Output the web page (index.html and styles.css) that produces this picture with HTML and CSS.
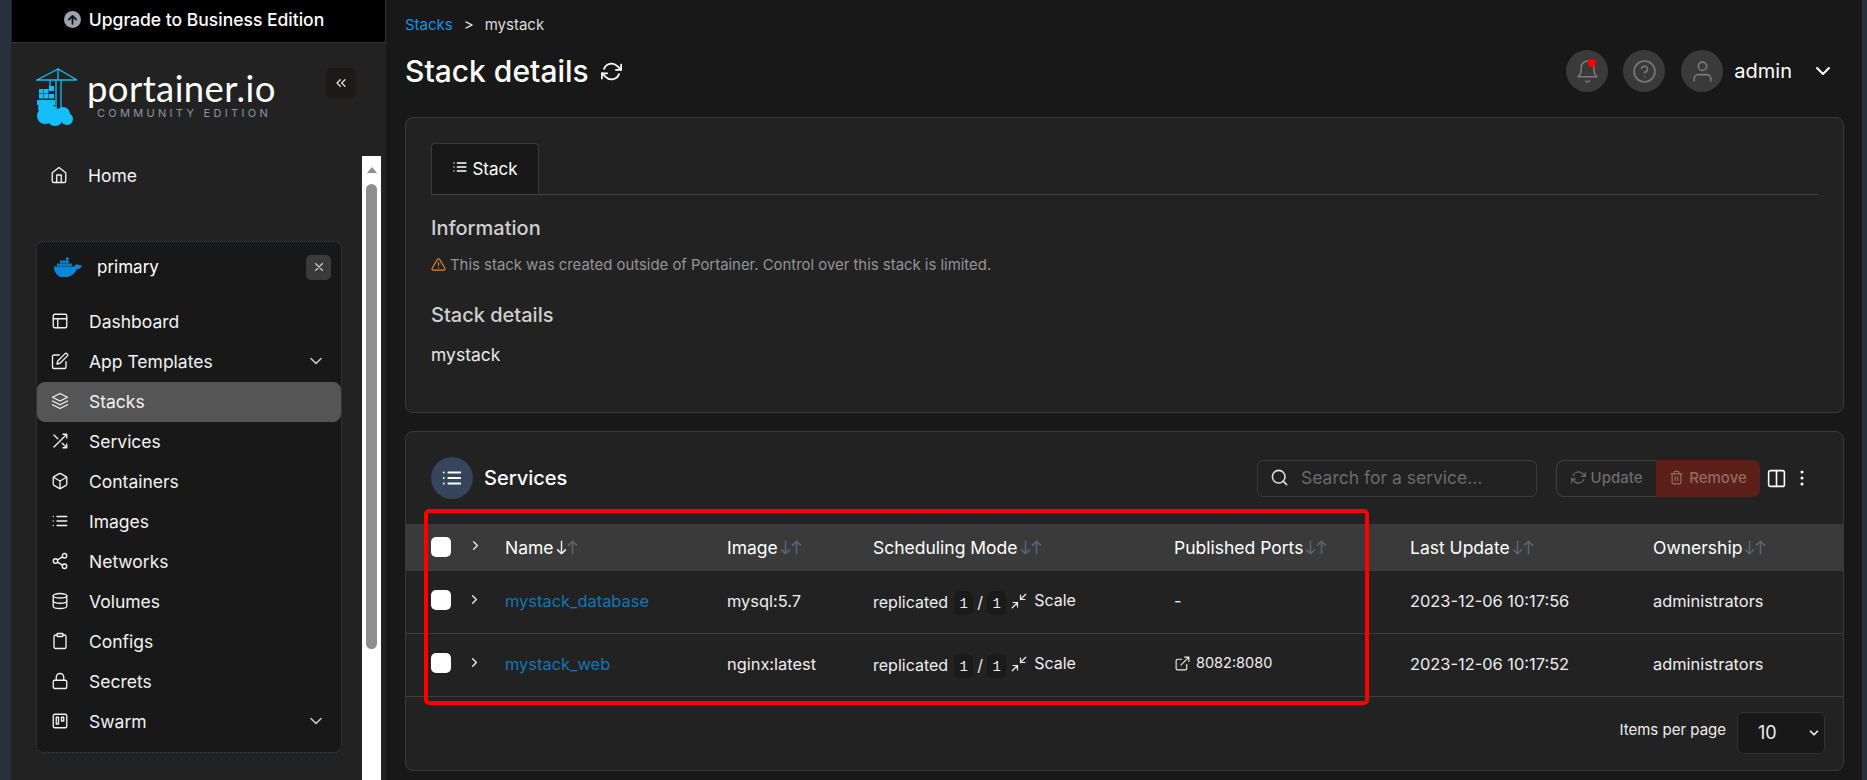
FILE: index.html
```html
<!DOCTYPE html>
<html lang="en">
<head>
    <meta charset="UTF-8">
    <title>Stack details | Portainer</title>
    <link rel="stylesheet" href="styles.css">
</head>
<body>
    <svg class="sprite" xmlns="http://www.w3.org/2000/svg">
        <symbol id="i-home" viewBox="0 0 24 24"><path d="M3 9l9-7 9 7v11a2 2 0 0 1-2 2H5a2 2 0 0 1-2-2z"/><path d="M9 22V12h6v10"/></symbol>
        <symbol id="i-layout" viewBox="0 0 24 24"><rect x="3" y="3" width="18" height="18" rx="2"/><path d="M3 9h18M9 21V9"/></symbol>
        <symbol id="i-edit" viewBox="0 0 24 24"><path d="M11 4H4a2 2 0 0 0-2 2v14a2 2 0 0 0 2 2h14a2 2 0 0 0 2-2v-7"/><path d="M18.5 2.5a2.121 2.121 0 0 1 3 3L12 15l-4 1 1-4 9.5-9.5z"/></symbol>
        <symbol id="i-layers" viewBox="0 0 24 24"><path d="M12 2 2 7l10 5 10-5-10-5z"/><path d="M2 17l10 5 10-5"/><path d="M2 12l10 5 10-5"/></symbol>
        <symbol id="i-shuffle" viewBox="0 0 24 24"><path d="M16 3h5v5M4 20 21 3M21 16v5h-5M15 15l6 6M4 4l5 5"/></symbol>
        <symbol id="i-box" viewBox="0 0 24 24"><path d="M21 16V8a2 2 0 0 0-1-1.73l-7-4a2 2 0 0 0-2 0l-7 4A2 2 0 0 0 3 8v8a2 2 0 0 0 1 1.73l7 4a2 2 0 0 0 2 0l7-4A2 2 0 0 0 21 16z"/><path d="M3.27 6.96 12 12.01l8.73-5.05M12 22.08V12"/></symbol>
        <symbol id="i-list" viewBox="0 0 24 24"><path d="M8 6h13M8 12h13M8 18h13M3 6h.01M3 12h.01M3 18h.01"/></symbol>
        <symbol id="i-share" viewBox="0 0 24 24"><circle cx="18" cy="5" r="3"/><circle cx="6" cy="12" r="3"/><circle cx="18" cy="19" r="3"/><path d="M8.59 13.51l6.83 3.98M15.41 6.51l-6.82 3.98"/></symbol>
        <symbol id="i-database" viewBox="0 0 24 24"><ellipse cx="12" cy="5" rx="9" ry="3"/><path d="M21 12c0 1.66-4 3-9 3s-9-1.34-9-3"/><path d="M3 5v14c0 1.66 4 3 9 3s9-1.34 9-3V5"/></symbol>
        <symbol id="i-clipboard" viewBox="0 0 24 24"><path d="M16 4h2a2 2 0 0 1 2 2v14a2 2 0 0 1-2 2H6a2 2 0 0 1-2-2V6a2 2 0 0 1 2-2h2"/><rect x="8" y="2" width="8" height="4" rx="1"/></symbol>
        <symbol id="i-lock" viewBox="0 0 24 24"><rect x="3" y="11" width="18" height="11" rx="2"/><path d="M7 11V7a5 5 0 0 1 10 0v4"/></symbol>
        <symbol id="i-trello" viewBox="0 0 24 24"><rect x="3" y="3" width="18" height="18" rx="2"/><rect x="7" y="7" width="3" height="9"/><rect x="14" y="7" width="3" height="5"/></symbol>
        <symbol id="i-down" viewBox="0 0 24 24"><path d="M6 9l6 6 6-6"/></symbol>
        <symbol id="i-right" viewBox="0 0 24 24"><path d="M9 18l6-6-6-6"/></symbol>
        <symbol id="i-refresh" viewBox="0 0 24 24"><path d="M23 4v6h-6M1 20v-6h6"/><path d="M3.51 9a9 9 0 0 1 14.85-3.36L23 10M1 14l4.64 4.36A9 9 0 0 0 20.49 15"/></symbol>
        <symbol id="i-shrink" viewBox="0 0 24 24"><path d="M4 14h6v6M20 10h-6V4M14 10l7-7M3 21l7-7"/></symbol>
        <symbol id="i-external" viewBox="0 0 24 24"><path d="M18 13v6a2 2 0 0 1-2 2H5a2 2 0 0 1-2-2V8a2 2 0 0 1 2-2h6"/><path d="M15 3h6v6M10 14 21 3"/></symbol>
        <symbol id="i-arrow-down" viewBox="0 0 12 24"><path d="M6 4v16M1 15l5 5 5-5"/></symbol>
        <symbol id="i-arrow-up" viewBox="0 0 12 24"><path d="M6 20V4M1 9l5-5 5 5"/></symbol>
    </svg>

    <div class="edge"></div>

    <aside class="sidebar">
        <div class="upgrade">
            <svg class="upgrade-icon" viewBox="0 0 24 24"><circle cx="12" cy="12" r="12"/><path d="M12 18V7M7 12l5-5 5 5"/></svg>
            Upgrade to Business Edition
        </div>

        <div class="brand">
            <svg class="brand-logo" viewBox="0 0 41 58">
                <g class="crane">
                    <path d="M0 12h41M1 12 22 1l19 11M22 0v12"/>
                    <path d="M20 12v33M25 12v31"/>
                    <path d="M14 12v6"/>
                </g>
                <g class="crate">
                    <rect x="13" y="18" width="5" height="5"/>
                    <rect x="3" y="21" width="4.5" height="4.5"/><rect x="8" y="21" width="4.5" height="4.5"/>
                    <rect x="3" y="26" width="4.5" height="4.5"/><rect x="8" y="26" width="4.5" height="4.5"/><rect x="13" y="26" width="5" height="4.5"/>
                    <rect x="1" y="32" width="18" height="5"/>
                </g>
                <g class="crate">
                    <circle cx="10" cy="40" r="8"/>
                    <circle cx="27" cy="46" r="7"/>
                    <circle cx="9" cy="48" r="8"/>
                    <circle cx="19" cy="50" r="8"/>
                    <circle cx="31" cy="51" r="6"/>
                    <circle cx="16" cy="45" r="7"/>
                </g>
            </svg>
            <div class="brand-text">
                <div class="brand-name">portainer.io</div>
                <div class="brand-sub">COMMUNITY EDITION</div>
            </div>
            <button class="collapse"><svg class="icon" viewBox="0 0 24 24"><path d="M11 17l-5-5 5-5M18 17l-5-5 5-5"/></svg></button>
        </div>

        <div class="side-scroll">
            <nav class="side-nav">
                <a class="nav-item nav-home"><svg class="icon"><use href="#i-home"/></svg>Home</a>

                <div class="env">
                    <div class="env-head">
                        <svg class="whale" viewBox="0 0 28 20">
                            <path d="M0 9.500h20.500c.5-1.600 2-2.600 3-2.200.4.800 1.800 1 4.500 1.100-1 2.800-2.500 3.500-5 3.600C20.800 17 16.500 20.500 10 20.500 3.500 20.500-.2 15-.1 9.500z"/>
                            <rect x="3" y="6.500" width="2.700" height="2.700"/><rect x="6" y="6.500" width="2.700" height="2.700"/><rect x="9" y="6.500" width="2.700" height="2.700"/><rect x="12" y="6.500" width="2.700" height="2.700"/><rect x="15" y="6.500" width="2.700" height="2.700"/>
                            <rect x="6" y="3.500" width="2.700" height="2.700"/><rect x="9" y="3.500" width="2.700" height="2.700"/><rect x="12" y="3.500" width="2.700" height="2.700"/>
                            <rect x="12" y="0.500" width="2.700" height="2.700"/>
                        </svg>
                        <span class="env-name">primary</span>
                        <button class="env-close"><svg class="icon" viewBox="0 0 24 24"><path d="M18 6 6 18M6 6l12 12"/></svg></button>
                    </div>
                    <a class="nav-item"><svg class="icon"><use href="#i-layout"/></svg>Dashboard</a>
                    <a class="nav-item"><svg class="icon"><use href="#i-edit"/></svg>App Templates<svg class="icon nav-chevron"><use href="#i-down"/></svg></a>
                    <a class="nav-item active"><svg class="icon"><use href="#i-layers"/></svg>Stacks</a>
                    <a class="nav-item"><svg class="icon"><use href="#i-shuffle"/></svg>Services</a>
                    <a class="nav-item"><svg class="icon"><use href="#i-box"/></svg>Containers</a>
                    <a class="nav-item"><svg class="icon"><use href="#i-list"/></svg>Images</a>
                    <a class="nav-item"><svg class="icon"><use href="#i-share"/></svg>Networks</a>
                    <a class="nav-item"><svg class="icon"><use href="#i-database"/></svg>Volumes</a>
                    <a class="nav-item"><svg class="icon"><use href="#i-clipboard"/></svg>Configs</a>
                    <a class="nav-item"><svg class="icon"><use href="#i-lock"/></svg>Secrets</a>
                    <a class="nav-item"><svg class="icon"><use href="#i-trello"/></svg>Swarm<svg class="icon nav-chevron"><use href="#i-down"/></svg></a>
                </div>
            </nav>
            <div class="scrollbar">
                <div class="scroll-up"></div>
                <div class="scroll-thumb"></div>
            </div>
        </div>
    </aside>

    <main class="main">
        <header class="top">
            <div>
                <div class="crumbs"><a>Stacks</a><span class="crumb-sep">&gt;</span>mystack</div>
                <h1>Stack details<svg class="icon title-refresh"><use href="#i-refresh"/></svg></h1>
            </div>
            <div class="top-right">
                <span class="round bell">
                    <svg class="icon" viewBox="0 0 24 24"><path d="M18 8A6 6 0 0 0 6 8c0 7-3 9-3 9h18s-3-2-3-9"/><path d="M13.730 21a2 2 0 0 1-3.460 0"/></svg>
                    <i class="dot"></i>
                </span>
                <span class="round help"><svg class="icon" viewBox="0 0 24 24"><circle cx="12" cy="12" r="10"/><path d="M9.090 9a3 3 0 0 1 5.830 1c0 2-3 3-3 3M12 17h.01"/></svg></span>
                <span class="round user"><svg class="icon" viewBox="0 0 24 24"><path d="M20 21v-2a4 4 0 0 0-4-4H8a4 4 0 0 0-4 4v2"/><circle cx="12" cy="7" r="4"/></svg></span>
                <span class="username">admin</span>
                <svg class="icon user-chevron"><use href="#i-down"/></svg>
            </div>
        </header>

        <section class="card info-card">
            <div class="tabs">
                <div class="tab"><svg class="icon"><use href="#i-list"/></svg>Stack</div>
            </div>
            <h2 class="info-title">Information</h2>
            <p class="warning">
                <svg class="icon" viewBox="0 0 24 24"><path d="M10.290 3.860 1.820 18a2 2 0 0 0 1.710 3h16.940a2 2 0 0 0 1.710-3L13.710 3.860a2 2 0 0 0-3.420 0z"/><path d="M12 9v4M12 17h.01"/></svg>
                This stack was created outside of Portainer. Control over this stack is limited.
            </p>
            <h2 class="details-title">Stack details</h2>
            <p class="stack-name">mystack</p>
        </section>

        <section class="card services-card">
            <div class="table-head">
                <span class="head-icon"><svg class="icon"><use href="#i-list"/></svg></span>
                <h2>Services</h2>
                <div class="search">
                    <svg class="icon" viewBox="0 0 24 24"><circle cx="11" cy="11" r="8"/><path d="M21 21l-4.350-4.350"/></svg>
                    <span>Search for a service...</span>
                </div>
                <div class="actions">
                    <button class="btn-update"><svg class="icon"><use href="#i-refresh"/></svg>Update</button>
                    <button class="btn-remove">
                        <svg class="icon" viewBox="0 0 24 24"><path d="M3 6h18M19 6v14a2 2 0 0 1-2 2H7a2 2 0 0 1-2-2V6m3 0V4a2 2 0 0 1 2-2h4a2 2 0 0 1 2 2v2M10 11v6M14 11v6"/></svg>Remove
                    </button>
                </div>
                <svg class="icon columns" viewBox="0 0 24 24"><rect x="3" y="3" width="18" height="18" rx="2"/><path d="M12 3v18"/></svg>
                <svg class="more" viewBox="0 0 4 16"><circle cx="2" cy="2" r="1.500"/><circle cx="2" cy="8" r="1.500"/><circle cx="2" cy="14" r="1.500"/></svg>
            </div>

            <table class="services">
                <colgroup>
                    <col class="c-select"><col class="c-expand"><col class="c-name"><col class="c-image"><col class="c-mode"><col class="c-ports"><col class="c-update"><col>
                </colgroup>
                <thead>
                    <tr>
                        <th><span class="check"></span></th>
                        <th><svg class="icon chevron"><use href="#i-right"/></svg></th>
                        <th>Name<span class="sort sorted"><svg><use href="#i-arrow-down"/></svg><svg><use href="#i-arrow-up"/></svg></span></th>
                        <th>Image<span class="sort"><svg><use href="#i-arrow-down"/></svg><svg><use href="#i-arrow-up"/></svg></span></th>
                        <th>Scheduling Mode<span class="sort"><svg><use href="#i-arrow-down"/></svg><svg><use href="#i-arrow-up"/></svg></span></th>
                        <th>Published Ports<span class="sort"><svg><use href="#i-arrow-down"/></svg><svg><use href="#i-arrow-up"/></svg></span></th>
                        <th>Last Update<span class="sort"><svg><use href="#i-arrow-down"/></svg><svg><use href="#i-arrow-up"/></svg></span></th>
                        <th>Ownership<span class="sort"><svg><use href="#i-arrow-down"/></svg><svg><use href="#i-arrow-up"/></svg></span></th>
                    </tr>
                </thead>
                <tbody>
                    <tr>
                        <td><span class="check"></span></td>
                        <td><svg class="icon chevron"><use href="#i-right"/></svg></td>
                        <td><a class="link">mystack_database</a></td>
                        <td>mysql:5.7</td>
                        <td><div class="mode">replicated <code>1</code><span class="slash">/</span><code>1</code><svg class="icon shrink"><use href="#i-shrink"/></svg><span class="scale">Scale</span></div></td>
                        <td>-</td>
                        <td>2023-12-06 10:17:56</td>
                        <td>administrators</td>
                    </tr>
                    <tr>
                        <td><span class="check"></span></td>
                        <td><svg class="icon chevron"><use href="#i-right"/></svg></td>
                        <td><a class="link">mystack_web</a></td>
                        <td>nginx:latest</td>
                        <td><div class="mode">replicated <code>1</code><span class="slash">/</span><code>1</code><svg class="icon shrink"><use href="#i-shrink"/></svg><span class="scale">Scale</span></div></td>
                        <td><span class="port"><svg class="icon"><use href="#i-external"/></svg>8082:8080</span></td>
                        <td>2023-12-06 10:17:52</td>
                        <td>administrators</td>
                    </tr>
                </tbody>
            </table>

            <div class="table-foot">
                <span>Items per page</span>
                <div class="page-size">10<svg class="icon"><use href="#i-down"/></svg></div>
            </div>
        </section>
    </main>

    <div class="edge edge-right"></div>

    <!-- red box drawn over the table in the screenshot -->
    <div class="annotation"></div>
</body>
</html>
```

FILE: styles.css
```css
* {
    box-sizing: border-box;
}
html, body {
    height: 100%;
}
body {
    margin: 0;
    display: flex;
    height: 780px;
    overflow: hidden;
    position: relative;
    background: #181818;
    color: #fff;
    font-family: Inter, "Noto Sans", sans-serif;
    font-size: 14px;
}
h1, h2, p {
    margin: 0;
}
button {
    font-family: inherit;
    border: none;
    padding: 0;
}
.sprite {
    display: none;
}
.icon {
    width: 16px;
    height: 16px;
    fill: none;
    stroke: currentColor;
    stroke-width: 2;
    stroke-linecap: round;
    stroke-linejoin: round;
    flex-shrink: 0;
}

/* outer strips */
.edge {
    width: 11px;
    flex-shrink: 0;
    background: #27303d;
}
.edge-right {
    width: 5px;
}

/* sidebar */
.sidebar {
    width: 375px;
    flex-shrink: 0;
    background: #222;
    display: flex;
    flex-direction: column;
}
.upgrade {
    height: 43px;
    flex-shrink: 0;
    margin-left: 1px;
    background: #000;
    border: 1px solid #333;
    border-width: 0 1px 1px 0;
    display: flex;
    align-items: center;
    justify-content: center;
    gap: 8px;
    font-size: 17.5px;
    font-weight: 500;
    padding: 0 6px 3px 0;
}
.upgrade-icon {
    width: 17px;
    height: 17px;
    fill: #9ca3af;
    margin-left: -3px;
}
.upgrade-icon path {
    fill: none;
    stroke: #111;
    stroke-width: 2.5;
    stroke-linecap: round;
    stroke-linejoin: round;
}
.brand {
    height: 113px;
    flex-shrink: 0;
    display: flex;
    align-items: flex-start;
    padding: 25px 0 0 25px;
    position: relative;
}
.brand-logo {
    width: 41px;
    height: 58px;
}
.crane {
    fill: none;
    stroke: #13bef9;
    stroke-width: 1.3;
}
.crate {
    fill: #13bef9;
}
.brand-text {
    margin-left: 10px;
    width: 190px;
}
.brand-name {
    font-family: Lato, sans-serif;
    font-size: 36.5px;
    line-height: 36px;
    margin-top: 2px;
    letter-spacing: 0.4px;
}
.brand-sub {
    font-size: 11px;
    line-height: 12px;
    letter-spacing: 3.3px;
    color: #8a93a5;
    margin-left: 10px;
    margin-top: 1px;
    white-space: nowrap;
}
.collapse {
    margin-left: auto;
    margin-right: 30px;
    width: 30px;
    height: 30px;
    background: #1c1917;
    color: #ddd;
    border-radius: 5px;
    display: flex;
    align-items: center;
    justify-content: center;
}
.side-scroll {
    flex: 1;
    display: flex;
    min-height: 0;
}
.side-nav {
    width: 351px;
    flex-shrink: 0;
    padding: 0 20px 0 25px;
}
.nav-item {
    display: flex;
    align-items: center;
    height: 40px;
    padding: 0 0 2px 14px;
    gap: 20px;
    font-size: 17.5px;
    color: #f2f2f2;
    border-radius: 8px;
}
.nav-item .icon {
    width: 18px;
    height: 18px;
    stroke-width: 1.800;
}
.nav-home {
    margin-bottom: 45px;
}
.nav-item .nav-chevron {
    width: 20px;
    height: 20px;
    margin-left: auto;
    margin-right: 15px;
    color: #ccc;
}
.active {
    background: #555;
}
.env {
    height: 512px;
    background: #181818;
    border: 1px dotted #3f4a5c;
    border-radius: 8px;
    padding: 0;
}
.env-head {
    height: 50px;
    display: flex;
    align-items: center;
    padding: 0 10px 0 17px;
    margin-bottom: 10px;
}
.whale {
    width: 28px;
    height: 20px;
    fill: #0b87d9;
}
.env-name {
    font-size: 17px;
    margin-left: 15px;
}
.env-close {
    margin-left: auto;
    width: 25px;
    height: 25px;
    background: #3a3a3a;
    color: #ccc;
    border-radius: 5px;
    display: flex;
    align-items: center;
    justify-content: center;
}
.env-close .icon {
    width: 14px;
    height: 14px;
}
.scrollbar {
    width: 19px;
    background: #fff;
    padding: 0 4px;
    position: relative;
}
.scroll-up {
    width: 0;
    height: 0;
    margin: 11px auto 0;
    border: 5px solid transparent;
    border-top: none;
    border-bottom: 6px solid #8e8e8e;
    margin-bottom: 11px;
}
.scroll-thumb {
    height: 465px;
    background: #8e8e8e;
    border-radius: 6px;
}

/* main */
.main {
    flex: 1;
    min-width: 0;
    padding: 0 18px 0 19px;
}
.top {
    height: 117px;
    display: flex;
    justify-content: space-between;
}
.crumbs {
    font-size: 15px;
    color: #ddd;
    padding-top: 16px;
    line-height: 17px;
}
.crumbs a {
    color: #0d95e8;
}
.crumb-sep {
    margin: 0 11px;
}
h1 {
    font-size: 30px;
    font-weight: 500;
    line-height: 36px;
    margin-top: 20px;
    display: flex;
    align-items: center;
}
.title-refresh {
    width: 21px;
    height: 21px;
    margin-left: 12px;
}
.top-right {
    display: flex;
    align-items: center;
    height: 42px;
    margin-top: 50px;
    padding-right: 9px;
}
.round {
    width: 42px;
    height: 42px;
    border-radius: 50%;
    background: #3a3a3a;
    color: #7a7a7a;
    display: flex;
    align-items: center;
    justify-content: center;
    position: relative;
}
.round .icon {
    width: 25px;
    height: 25px;
    stroke-width: 1.500;
}
.help {
    margin-left: 15px;
}
.user {
    margin-left: 16px;
}
.dot {
    position: absolute;
    top: 9px;
    left: 22px;
    width: 8px;
    height: 8px;
    border-radius: 50%;
    background: #f00;
}
.username {
    font-size: 20px;
    margin-left: 11px;
}
.user-chevron {
    margin-left: 19px;
    width: 24px;
    height: 24px;
}

.card {
    background: #222;
    border: 1px solid #393939;
    border-radius: 8px;
    width: 1439px;
}
.info-card {
    height: 296px;
    padding: 25px 25px 0;
}
.tabs {
    height: 52px;
    border-bottom: 1px solid #444;
}
.tab {
    width: 108px;
    height: 52px;
    background: #181818;
    border: 1px solid #3a3a3a;
    border-bottom: 1px solid #444;
    border-radius: 4px 4px 0 0;
    display: flex;
    align-items: center;
    justify-content: center;
    gap: 4px;
    font-size: 17px;
}
.tab .icon {
    margin-top: -5px;
}
.info-title,
.details-title {
    font-size: 20px;
    font-weight: 500;
    color: #cfcfcf;
    line-height: 24px;
}
.info-title {
    margin-top: 21px;
}
.warning {
    display: flex;
    align-items: center;
    gap: 4px;
    margin-top: 16px;
    font-size: 14.9px;
    color: #949494;
    line-height: 18px;
}
.warning .icon {
    width: 15px;
    height: 15px;
    color: #e48a1b;
    stroke-width: 1.800;
    margin-top: -2px;
}
.details-title {
    margin-top: 29px;
}
.stack-name {
    margin-top: 18px;
    font-size: 17.5px;
    line-height: 20px;
    color: #e8e8e8;
}

.services-card {
    margin-top: 18px;
    height: 340px;
}
.table-head {
    height: 92px;
    display: flex;
    align-items: center;
    padding: 0 39px 0 25px;
}
.head-icon {
    width: 42px;
    height: 42px;
    border-radius: 50%;
    background: #36455c;
    display: flex;
    align-items: center;
    justify-content: center;
}
.head-icon .icon {
    width: 22px;
    height: 22px;
}
.table-head h2 {
    font-size: 20px;
    font-weight: 500;
    margin-left: 11px;
}
.search {
    margin-left: auto;
    width: 280px;
    height: 37px;
    border: 1px solid #3a3a3a;
    border-radius: 6px;
    display: flex;
    align-items: center;
    gap: 12px;
    padding: 0 0 1px 12px;
    font-size: 17.5px;
    color: #6b6b6b;
}
.search .icon {
    width: 19px;
    height: 19px;
    color: #ddd;
}
.actions {
    display: flex;
    height: 37px;
    margin-left: 19px;
}
.actions button {
    display: flex;
    align-items: center;
    justify-content: center;
    gap: 5px;
    font-size: 15px;
    font-weight: 500;
    padding-bottom: 1px;
}
.actions .icon {
    width: 15px;
    height: 15px;
}
.btn-update {
    width: 100px;
    background: transparent;
    color: #6b6b6b;
    border: 1px solid #3f3f3f;
    border-right: none;
    border-radius: 8px 0 0 8px;
}
.btn-remove {
    width: 104px;
    background: #5c2019;
    color: #8f6b66;
    border-radius: 0 8px 8px 0;
}
.columns {
    margin-left: 6px;
    width: 21px;
    height: 21px;
    stroke-width: 1.800;
}
.more {
    width: 4px;
    height: 16px;
    fill: #fff;
    margin-left: 13px;
}

.services {
    width: 100%;
    border-collapse: collapse;
    table-layout: fixed;
}
.c-select {
    width: 69px;
}
.c-expand {
    width: 30px;
}
.c-name {
    width: 222px;
}
.c-image {
    width: 146px;
}
.c-mode {
    width: 301px;
}
.c-ports {
    width: 236px;
}
.c-update {
    width: 243px;
}
.services th {
    height: 47px;
    background: #3a3a3a;
    text-align: left;
    font-size: 17.5px;
    font-weight: 400;
    padding: 0 0 1px;
    white-space: nowrap;
}
.services td {
    height: 63px;
    padding: 0 0 1px;
    font-size: 16.4px;
    color: #eee;
    border-bottom: 1px solid #3f3f3f;
    white-space: nowrap;
}
.services tbody tr:first-child td {
    height: 62px;
}
.services th:first-child,
.services td:first-child {
    padding-left: 25px;
}
.check {
    display: block;
    width: 20px;
    height: 20px;
    background: #fff;
    border-radius: 5px;
}
.services td .check {
    margin-top: -2px;
}
.chevron {
    display: block;
    width: 15px;
    height: 15px;
    margin-top: -4px;
    margin-left: -7px;
    color: #eee;
}
.services td .chevron {
    margin-left: -8px;
}
.sort {
    display: inline-flex;
    vertical-align: -3px;
    color: #5b6478;
    margin-left: 2px;
}
.sort svg {
    width: 11px;
    height: 19px;
    fill: none;
    stroke: currentColor;
    stroke-width: 1.800;
    stroke-linecap: round;
    stroke-linejoin: round;
}
.sorted svg:first-child {
    color: #eee;
}
.link {
    color: #1277b8;
}
.mode {
    display: flex;
    align-items: center;
    margin-top: 2px;
    font-size: 16px;
}
.mode code {
    display: block;
    width: 19px;
    height: 24px;
    line-height: 26px;
    margin-top: 2px;
    text-align: center;
    background: #1a1a1a;
    border-radius: 6px;
    font-family: "Liberation Mono", monospace;
    font-size: 14px;
}
.mode code:first-of-type {
    margin-left: 6px;
}
.slash {
    width: 14px;
    text-align: center;
}
.shrink {
    width: 18px;
    height: 18px;
    margin-left: 4px;
    margin-top: -3px;
    stroke-width: 1.600;
}
.scale {
    margin-left: 6px;
    margin-top: -5px;
}
.port {
    display: flex;
    align-items: center;
    gap: 5px;
    margin-top: -4px;
    font-size: 14.5px;
}
.port .icon {
    width: 17px;
    height: 17px;
    stroke-width: 1.600;
    margin-top: 3px;
}
.table-foot {
    display: flex;
    justify-content: flex-end;
    align-items: center;
    gap: 11px;
    height: 74px;
    padding-right: 18px;
    padding-bottom: 2px;
    font-size: 15px;
    color: #eee;
}
.table-foot span {
    margin-top: -6px;
}
.page-size {
    width: 88px;
    height: 42px;
    background: #181818;
    border: 1px solid #333;
    border-radius: 6px;
    display: flex;
    align-items: center;
    justify-content: space-between;
    padding: 0 3px 0 20px;
    font-size: 18px;
}
.page-size .icon {
    width: 14px;
    height: 14px;
    stroke-width: 3;
}

.annotation {
    position: absolute;
    left: 424px;
    top: 509px;
    width: 945px;
    height: 196px;
    border: 4px solid #f00;
    border-radius: 5px;
}
```
